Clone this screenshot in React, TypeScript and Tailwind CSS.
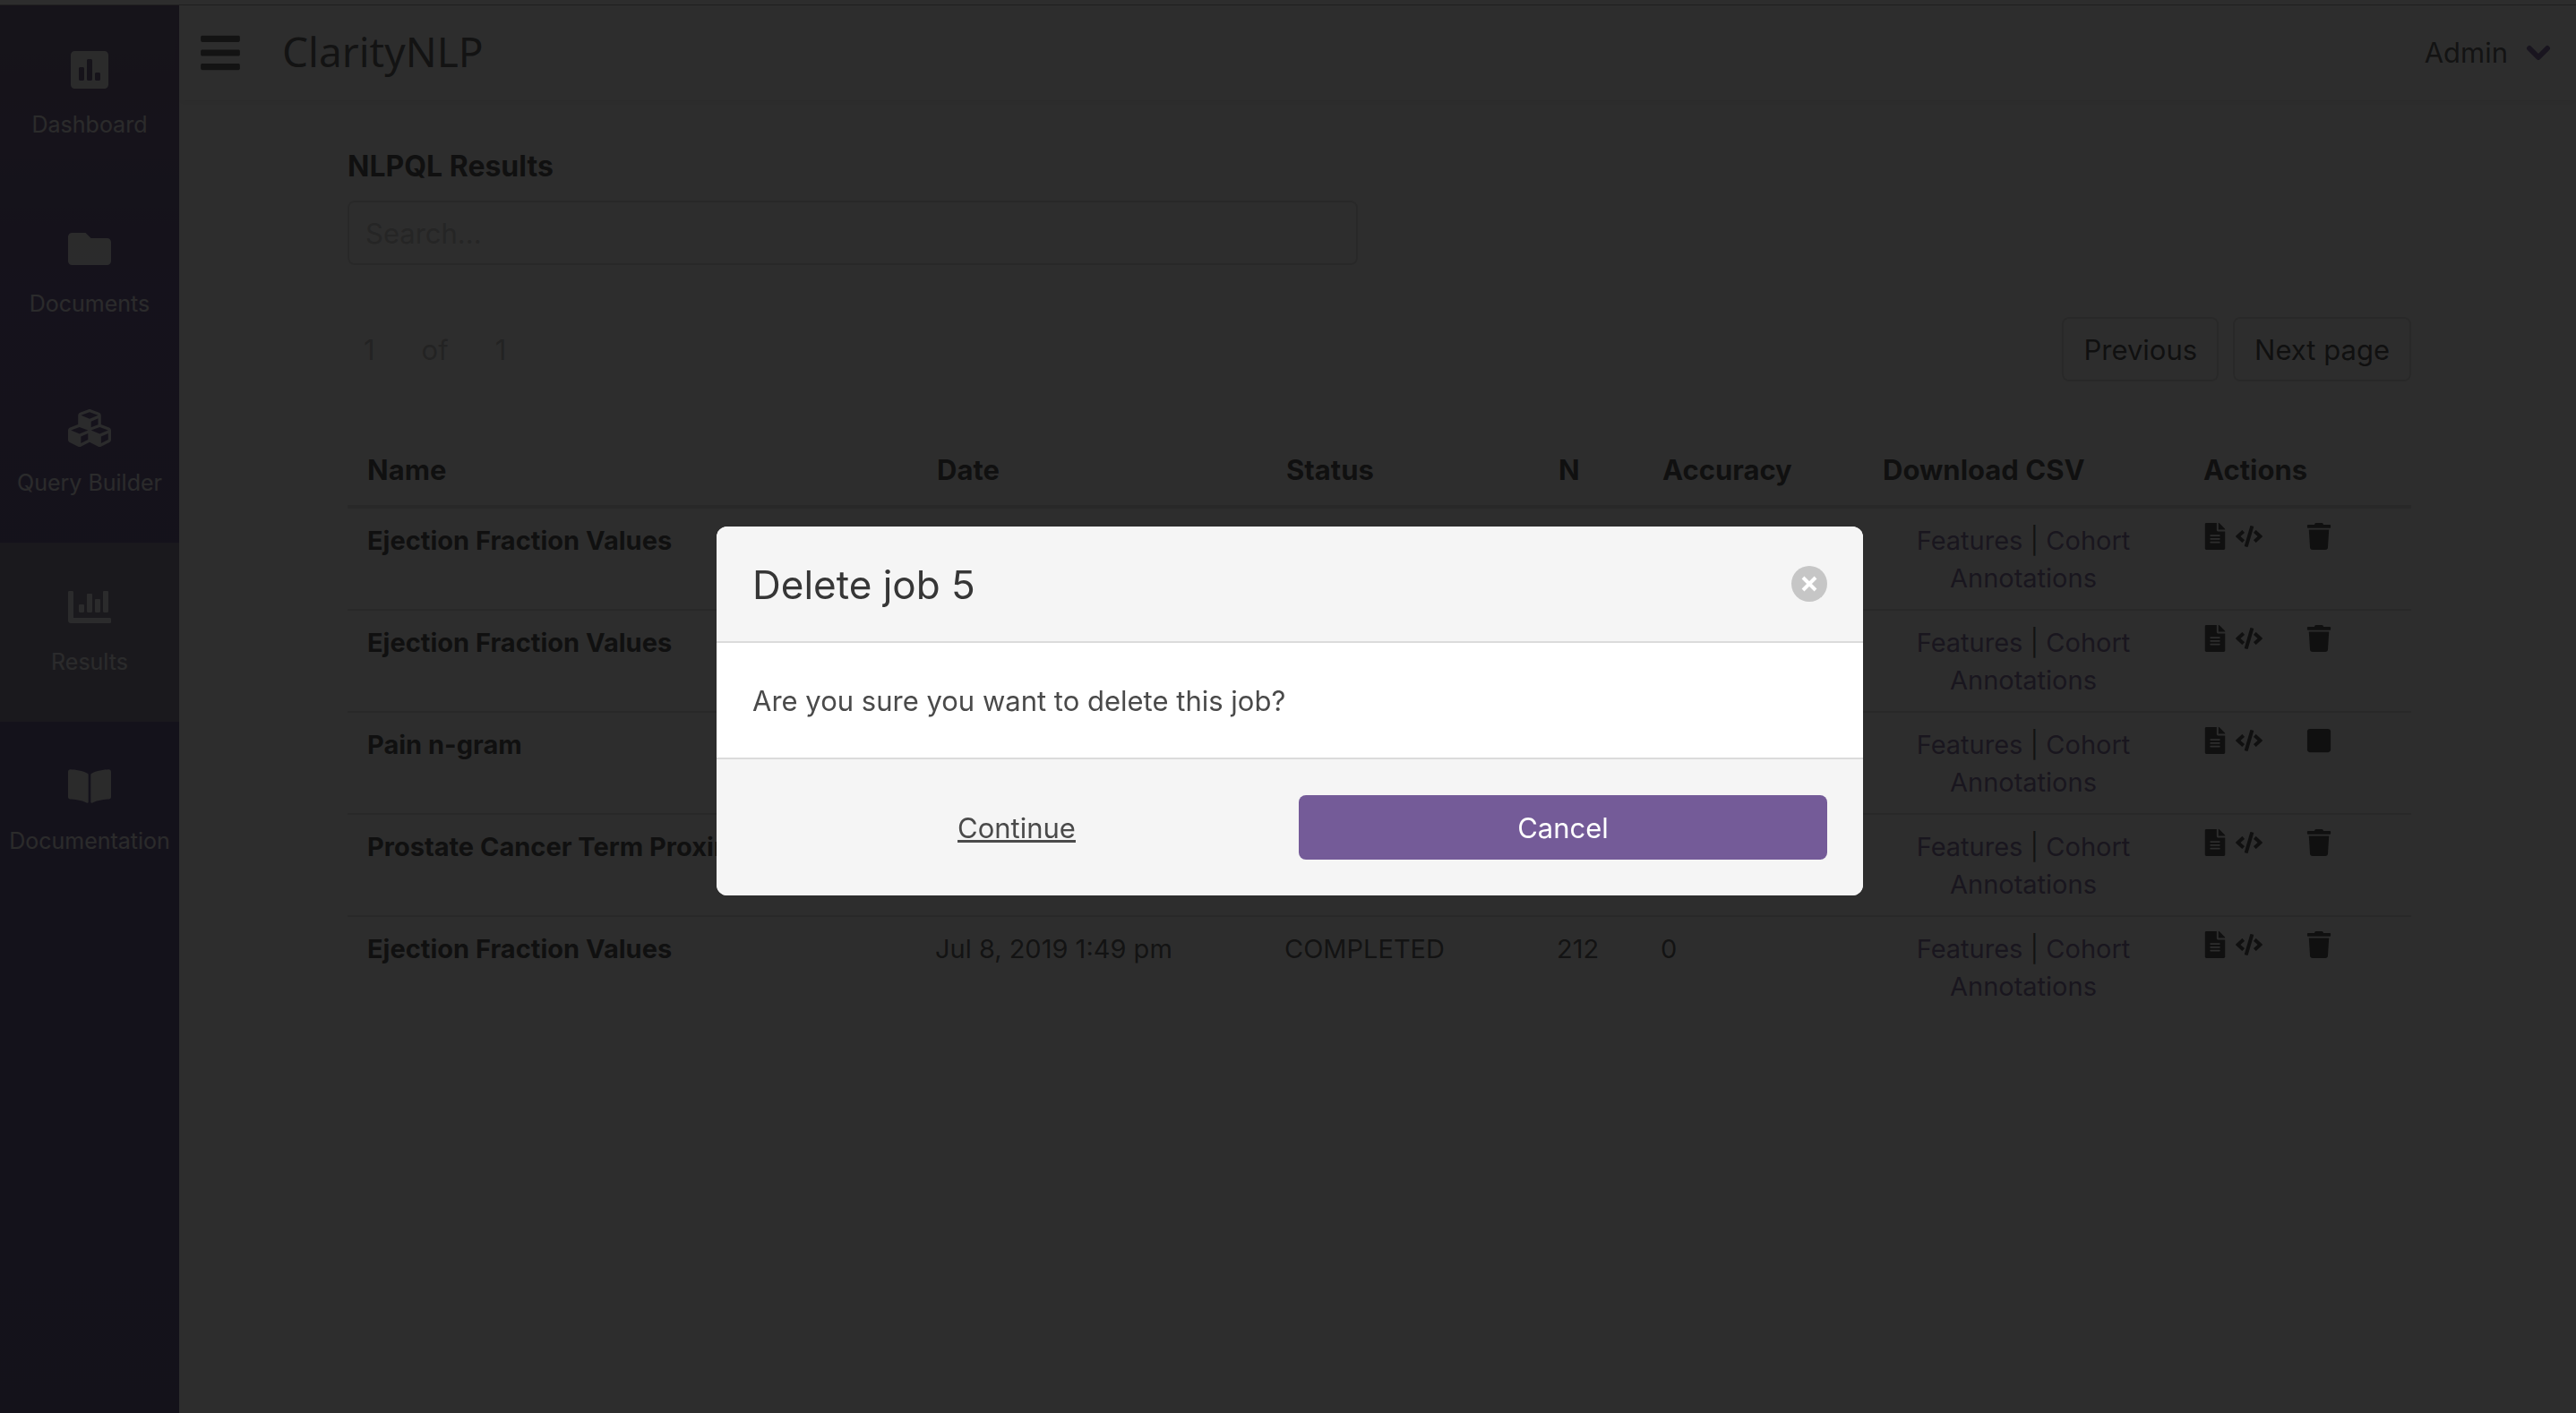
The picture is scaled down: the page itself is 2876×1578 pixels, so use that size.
import {
  FaBars,
  FaBookOpen,
  FaChartBar,
  FaCode,
  FaCubes,
  FaFileAlt,
  FaFolder,
  FaPoll,
  FaStop,
  FaTrash,
} from "react-icons/fa";
import type { IconType } from "react-icons";

type Job = {
  name: string;
  date: string;
  status: string;
  n: number;
  accuracy: number;
  running?: boolean;
};

const NAV: { label: string; icon: IconType; active?: boolean }[] = [
  { label: "Dashboard", icon: FaPoll },
  { label: "Documents", icon: FaFolder },
  { label: "Query Builder", icon: FaCubes },
  { label: "Results", icon: FaChartBar, active: true },
  { label: "Documentation", icon: FaBookOpen },
];

const JOBS: Job[] = [
  { name: "Ejection Fraction Values", date: "Jul 8, 2019 1:49 pm", status: "COMPLETED", n: 212, accuracy: 0 },
  { name: "Ejection Fraction Values", date: "Jul 8, 2019 1:49 pm", status: "COMPLETED", n: 212, accuracy: 0 },
  { name: "Pain n-gram", date: "Jul 8, 2019 1:49 pm", status: "STARTED", n: 0, accuracy: 0, running: true },
  { name: "Prostate Cancer Term Proximity", date: "Jul 8, 2019 1:49 pm", status: "COMPLETED", n: 212, accuracy: 0 },
  { name: "Ejection Fraction Values", date: "Jul 8, 2019 1:49 pm", status: "COMPLETED", n: 212, accuracy: 0 },
];

function Sidebar() {
  return (
    <nav className="w-[200px] shrink-0 bg-linear-to-b from-[#604f78] from-0% via-[#554284] via-20% to-[#4d3f7c] to-100%">
      {NAV.map(({ label, icon: Icon, active }) => (
        <a
          key={label}
          href="#"
          className={
            active
              ? "flex h-[200px] flex-col items-center gap-[21px] bg-[#7a7590] pt-12 text-white/90"
              : "flex h-[200px] flex-col items-center gap-[21px] pt-12 text-white/90"
          }
        >
          <Icon size={48} />
          <span className="text-[25px] leading-8 whitespace-nowrap">{label}</span>
        </a>
      ))}
    </nav>
  );
}

function TopBar() {
  return (
    <header className="flex h-[106px] items-center pr-7 pl-[21px] shadow-[0_4px_6px_rgba(10,10,10,0.06)]">
      <button type="button" aria-label="Toggle menu">
        <FaBars size={50} />
      </button>
      <h1 className="ml-11 pb-1 font-['Noto_Sans'] text-[46px] leading-[60px]">ClarityNLP</h1>
      <button type="button" className="ml-auto flex items-center gap-5 text-[31px] leading-12">
        Admin
        <svg width="28" height="20" viewBox="0 0 28 20" fill="none" aria-hidden="true">
          <path d="M4 5l10 10L24 5" stroke="#6f559a" strokeWidth="6" strokeLinejoin="round" strokeLinecap="round" />
        </svg>
      </button>
    </header>
  );
}

function JobTable() {
  return (
    <table className="mt-[58px] w-full table-fixed text-left">
      <colgroup>
        <col />
        <col className="w-[390px]" />
        <col className="w-[304px]" />
        <col className="w-[116px]" />
        <col className="w-[246px]" />
        <col className="w-[358px]" />
        <col className="w-[254px]" />
      </colgroup>
      <thead>
        <tr className="border-b-4 border-[#dbdbdb] text-[31px] leading-12 text-[#363636]">
          {["Name", "Date", "Status", "N", "Accuracy", "Download CSV", "Actions"].map((h) => (
            <th key={h} scope="col" className="px-[22px] pt-[17px] pb-[15px] font-bold whitespace-nowrap">
              {h}
            </th>
          ))}
        </tr>
      </thead>
      <tbody className="text-[29px] leading-[42px]">
        {JOBS.map((job, i) => (
          <tr key={i} className="border-b-2 border-[#dbdbdb] align-top last:border-b-0 even:bg-[#fafafa]">
            <th scope="row" className="px-[22px] pt-[15px] pb-[13px] font-bold whitespace-nowrap text-[#363636]">
              {job.name}
            </th>
            <td className="px-5 pt-[15px] pb-[13px]">{job.date}</td>
            <td className="px-5 pt-[15px] pb-[13px]">{job.status}</td>
            <td className="px-5 pt-[15px] pb-[13px]">{job.n}</td>
            <td className="px-5 pt-[15px] pb-[13px]">{job.accuracy}</td>
            <td className="px-5 pt-[15px] pb-[13px] text-center">
              <a href="#" className="text-[#745b98]">Features</a> |{" "}
              <a href="#" className="text-[#745b98]">Cohort</a>
              <br />
              <a href="#" className="text-[#745b98]">Annotations</a>
            </td>
            <td className="px-5 py-4 text-[#363636]">
              <div className="flex gap-12">
                <div className="flex gap-2">
                  <button type="button" aria-label="View NLPQL">
                    <FaFileAlt size={30} />
                  </button>
                  <button type="button" aria-label="View JSON">
                    <FaCode size={30} />
                  </button>
                </div>
                <button type="button" aria-label={job.running ? "Stop job" : "Delete job"}>
                  {job.running ? <FaStop size={30} /> : <FaTrash size={30} />}
                </button>
              </div>
            </td>
          </tr>
        ))}
      </tbody>
    </table>
  );
}

function Results() {
  const pageButton =
    "h-[72px] rounded-lg border-2 border-[#dbdbdb] px-[22px] pt-0.5 text-[31px] leading-12 text-[#363636]";
  return (
    <section className="pt-[50px] pl-1">
      <div className="mx-auto max-w-[2304px]">
        <div className="grid grid-cols-2 gap-12">
          <div>
            <label htmlFor="search" className="block text-[32px] leading-12 font-bold text-[#363636]">
              NLPQL Results
            </label>
            <input
              id="search"
              type="text"
              placeholder="Search..."
              className="mt-[14px] block h-[72px] w-full rounded-lg border-2 border-[#dbdbdb] px-[18px] text-[31px] placeholder:text-[#c3c3c3]"
            />
          </div>
        </div>
        <div className="mt-[58px] flex items-center justify-between">
          <div className="flex gap-[52px] px-[18px] pt-0.5 text-[31px] leading-12 text-[#b5b5b5]">
            <span>1</span>
            <span>of</span>
            <span>1</span>
          </div>
          <div className="flex gap-4">
            <button type="button" className={pageButton}>Previous</button>
            <button type="button" className={pageButton}>Next page</button>
          </div>
        </div>
        <JobTable />
      </div>
    </section>
  );
}

function DeleteDialog() {
  return (
    <div className="fixed inset-0 flex items-center justify-center bg-[rgba(10,10,10,0.86)] pt-[10px] pl-1">
      <div role="dialog" aria-modal="true" aria-labelledby="dialog-title" className="w-[1280px] max-w-full overflow-hidden rounded-xl bg-white">
        <header className="flex items-center justify-between border-b-2 border-[#dbdbdb] bg-[#f5f5f5] p-10">
          <h2 id="dialog-title" className="pt-0.5 text-[44px] leading-[46px] text-[#363636]">
            Delete job 5
          </h2>
          <button type="button" aria-label="Close" className="flex size-10 items-center justify-center rounded-full bg-[#c6c6c6]">
            <svg width="20" height="20" viewBox="0 0 20 20" aria-hidden="true">
              <path d="M3 3l14 14M17 3L3 17" stroke="#fff" strokeWidth="4" />
            </svg>
          </button>
        </header>
        <div className="px-10 pt-[41px] pb-[39px] text-[31px] leading-12">Are you sure you want to delete this job?</div>
        <footer className="grid grid-cols-2 gap-5 border-t-2 border-[#dbdbdb] bg-[#f5f5f5] p-10 text-[31px] leading-12">
          <button type="button" className="h-[72px] rounded-lg pt-0.5 underline">
            Continue
          </button>
          <button type="button" className="h-[72px] rounded-lg bg-[#745b98] pt-0.5 text-white">
            Cancel
          </button>
        </footer>
      </div>
    </div>
  );
}

export default function App() {
  return (
    <div className="flex min-h-screen flex-col bg-white font-[Inter,sans-serif] text-[#4a4a4a]">
      <div className="h-[6px] border-b border-[#a0a0a0]" />
      <div className="flex grow">
        <Sidebar />
        <main className="min-w-0 grow">
          <TopBar />
          <Results />
        </main>
      </div>
      <DeleteDialog />
    </div>
  );
}
